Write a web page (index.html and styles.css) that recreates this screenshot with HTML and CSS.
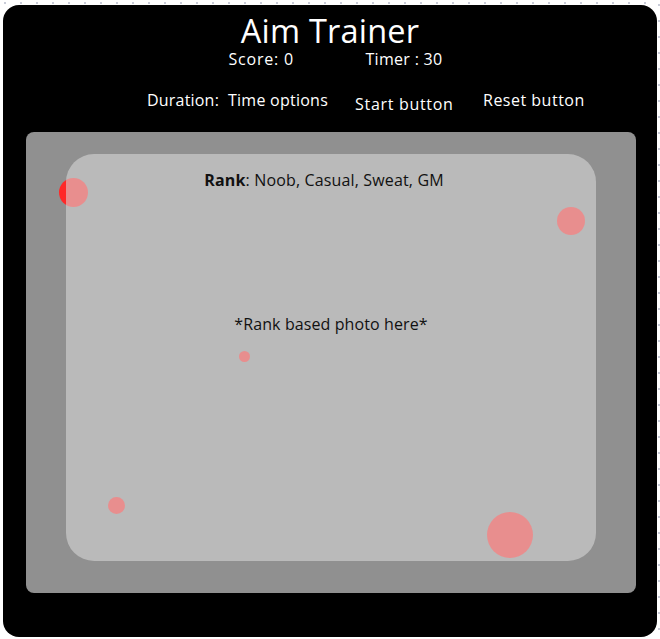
FILE: index.html
```html
<!DOCTYPE html>
<html lang="en">
<head>
<meta charset="utf-8">
<title>Aim Trainer</title>
<link rel="stylesheet" href="styles.css">
</head>
<body>
<div class="canvas">
  <main class="frame">
    <header class="header">
      <h1 class="title">Aim Trainer</h1>
      <div class="stats">
        <span class="stat score">Score: 0</span>
        <span class="stat timer">Timer : 30</span>
      </div>
      <div class="controls">
        <span class="duration">Duration:</span>
        <span class="options">Time options</span>
        <span class="start">Start button</span>
        <span class="reset">Reset button</span>
      </div>
    </header>
    <section class="arena">
      <span class="target t1"></span>
      <span class="target t2"></span>
      <span class="target t3"></span>
      <span class="target t4"></span>
      <span class="target t5"></span>
      <div class="board">
        <p class="rank"><b>Rank</b>: Noob, Casual, Sweat, GM</p>
        <p class="photo">*Rank based photo here*</p>
      </div>
    </section>
  </main>
</div>
</body>
</html>
```
FILE: styles.css
```css
html, body {
  margin: 0;
  padding: 0;
  background: #ffffff;
}
.canvas {
  width: 660px;
  height: 639px;
  box-sizing: border-box;
  padding: 5px 3px 2px 3px;
  background-image:
    linear-gradient(90deg, #c9ccd8 2px, transparent 2px),
    linear-gradient(180deg, #c9ccd8 2px, transparent 2px);
  background-size: 16px 2px, 2px 16px;
  background-position: 4px 2px, 658px 4px;
  background-repeat: repeat-x, repeat-y;
  font-family: "Open Sans", "Noto Sans", sans-serif;
}
.frame {
  height: 632px;
  background: #000;
  border-radius: 16px;
  color: #fff;
  display: flex;
  flex-direction: column;
  padding: 127px 21px 44px 23px;
  position: relative;
  box-sizing: border-box;
}
.header {
  position: absolute;
  left: 0;
  right: 0;
  top: 0;
}
.title {
  margin: 0;
  padding-top: 9px;
  font-size: 32.5px;
  font-weight: 400;
  line-height: 34px;
  text-align: center;
  letter-spacing: 0.2px;
}
.stats {
  display: flex;
  justify-content: center;
  font-size: 16px;
  line-height: 22px;
}
.score {
  letter-spacing: 0.8px;
  width: 137px;
  margin-left: 14px;
}
.timer {
  letter-spacing: 0.3px;
  width: 80px;
}
.controls {
  display: flex;
  align-items: flex-start;
  font-size: 16px;
  line-height: 20px;
  margin-top: 20px;
  padding-left: 144px;
}
.duration { width: 81px; letter-spacing: 0.2px; }
.options { width: 127px; letter-spacing: 0.25px; }
.start { width: 128px; margin-top: 4px; letter-spacing: 0.7px; }
.reset { letter-spacing: 0.5px; }
.arena {
  position: relative;
  flex: 1;
  background: #909090;
  border-radius: 8px;
  padding: 22px 40px 32px 40px;
  display: flex;
}
.board {
  position: relative;
  z-index: 1;
  flex: 1;
  border-radius: 28px;
  background: rgba(216, 216, 216, 0.585);
  color: #111;
  text-align: center;
  font-size: 16px;
}
.rank {
  margin: 16px 14px 0 0;
  line-height: 20px;
  letter-spacing: 0.15px;
}
.rank b { font-weight: 700; }
.photo {
  margin: 124px 0 0 0;
  line-height: 20px;
  letter-spacing: 0.1px;
}
.target {
  position: absolute;
  z-index: 0;
  border-radius: 50%;
  background: #ff2828;
}
.t1 { left: 33px; top: 46px; width: 29px; height: 29px; }
.t2 { left: 531px; top: 75px; width: 28px; height: 28px; }
.t3 { left: 213px; top: 219px; width: 11px; height: 11px; }
.t4 { left: 82px; top: 365px; width: 17px; height: 17px; }
.t5 { left: 461px; top: 380px; width: 46px; height: 46px; }
```
